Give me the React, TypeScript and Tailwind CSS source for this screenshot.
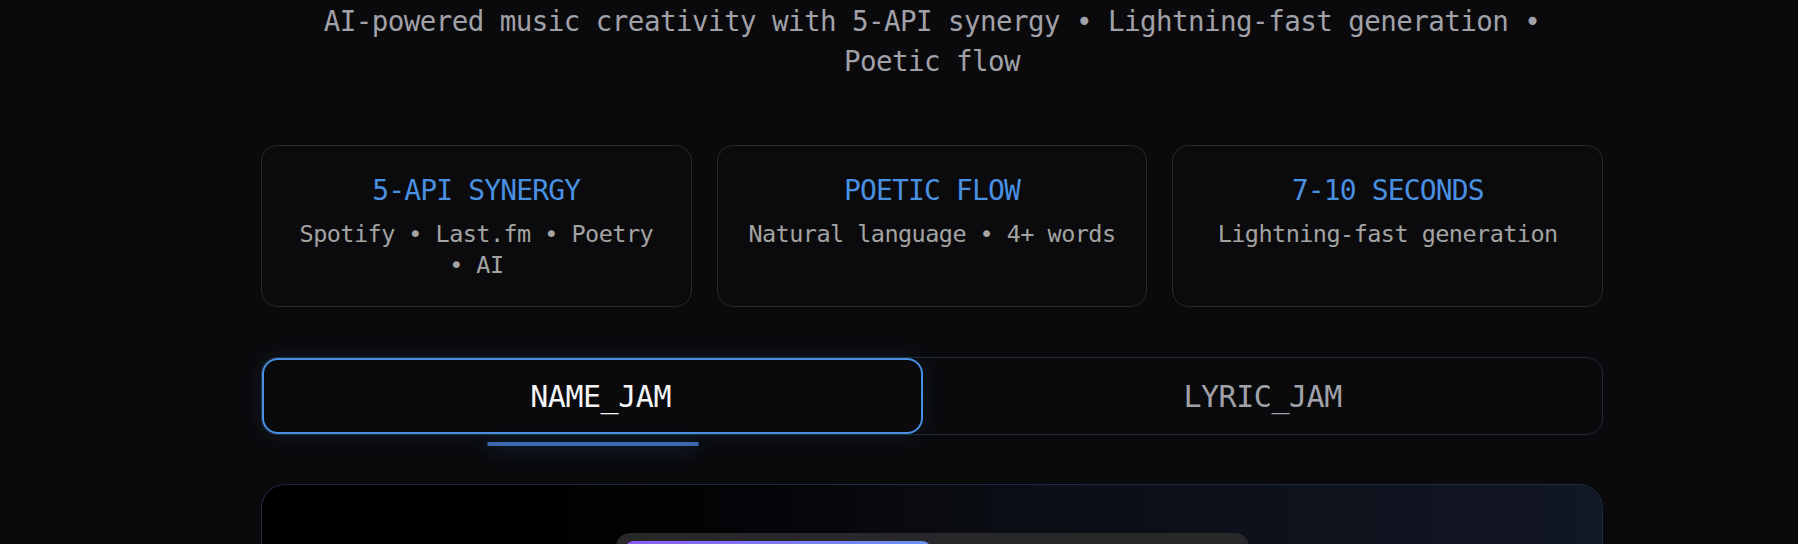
import { useState } from "react";

const mono = "font-['DejaVu_Sans_Mono','Liberation_Mono',monospace]";

const features = [
  { title: "5-API SYNERGY", desc: "Spotify • Last.fm • Poetry • AI" },
  { title: "POETIC FLOW", desc: "Natural language • 4+ words" },
  { title: "7-10 SECONDS", desc: "Lightning-fast generation" },
];

export default function App() {
  const [tab, setTab] = useState<"name" | "lyric">("name");
  const [mode, setMode] = useState(0);

  return (
    <div className={`min-h-[544px] overflow-hidden bg-[#0a0a0c] pl-[66px] ${mono}`}>
      <div className="mx-auto w-full max-w-[1342px]">
        {/* Subtitle */}
        <p className="mx-auto mt-px max-w-[1280px] text-center text-[27.5px] leading-[40px] tracking-[-0.55px] text-[#a1a1aa]">
          AI-powered music creativity with 5-API synergy • Lightning-fast generation • Poetic flow
        </p>

        {/* Feature cards */}
        <div className="mt-16 grid grid-cols-3 gap-[25px]">
          {features.map((f) => (
            <div
              key={f.title}
              className="rounded-[16px] border border-[#2a2a2d] bg-[#0b0b0d] px-7 pt-[29px] pb-[25px] text-center"
            >
              <h3 className="text-[28px] leading-[32px] tracking-[-0.86px] text-[#4a90e2]">
                {f.title}
              </h3>
              <p className="mt-3 text-[23.5px] leading-[31px] tracking-[-0.55px] text-[#a3a3a3]">
                {f.desc}
              </p>
            </div>
          ))}
        </div>

        {/* Tabs */}
        <div className="mt-[50px] flex rounded-[16px] border border-[#1e2b3c]">
          <button
            onClick={() => setTab("name")}
            className={`relative flex h-[76px] grow items-center justify-center rounded-[16px] border-2 text-[30px] tracking-[-0.46px] ${
              tab === "name"
                ? "border-[#4a90e2] bg-[#0a0a0c] text-[#f4f4f5] shadow-[0_0_24px_rgba(74,144,226,0.12)]"
                : "border-transparent text-[#a1a1aa]"
            }`}
          >
            <span className={tab === "name" ? "translate-x-2" : ""}>NAME_JAM</span>
            {tab === "name" && (
              <span className="absolute -bottom-[14px] left-1/2 h-1 w-[211px] -translate-x-1/2 bg-[#3a6aad] shadow-[0_4px_18px_rgba(74,144,226,0.35)]" />
            )}
          </button>
          <button
            onClick={() => setTab("lyric")}
            className={`relative flex h-[76px] grow items-center justify-center rounded-[16px] border-2 text-[30px] tracking-[-0.46px] ${
              tab === "lyric"
                ? "border-[#4a90e2] bg-[#0a0a0c] text-[#f4f4f5] shadow-[0_0_24px_rgba(74,144,226,0.12)]"
                : "border-transparent text-[#a1a1aa]"
            }`}
          >
            <span className={tab === "lyric" ? "translate-x-2" : ""}>LYRIC_JAM</span>
            {tab === "lyric" && (
              <span className="absolute -bottom-[14px] left-1/2 h-1 w-[211px] -translate-x-1/2 bg-[#3a6aad] shadow-[0_4px_18px_rgba(74,144,226,0.35)]" />
            )}
          </button>
        </div>

        {/* Generator panel */}
        <div className="mt-[49px] rounded-[24px] border border-[#1d2b44] bg-linear-to-r from-black via-[#0a0c12] to-[#121725] px-8 pt-12 pb-10">
          <div className="mx-auto flex h-[64px] w-[633px] rounded-[14px] bg-[#28282b] p-[8px]">
            <button
              onClick={() => setMode(0)}
              className={`flex-1 rounded-[10px] ${
                mode === 0 ? "bg-linear-to-r from-[#8b5cf6] to-[#6b93f2]" : ""
              }`}
            />
            <button
              onClick={() => setMode(1)}
              className={`flex-1 rounded-[10px] ${
                mode === 1 ? "bg-linear-to-r from-[#8b5cf6] to-[#6b93f2]" : ""
              }`}
            />
          </div>
          <div className="h-40" />
        </div>
      </div>
    </div>
  );
}
